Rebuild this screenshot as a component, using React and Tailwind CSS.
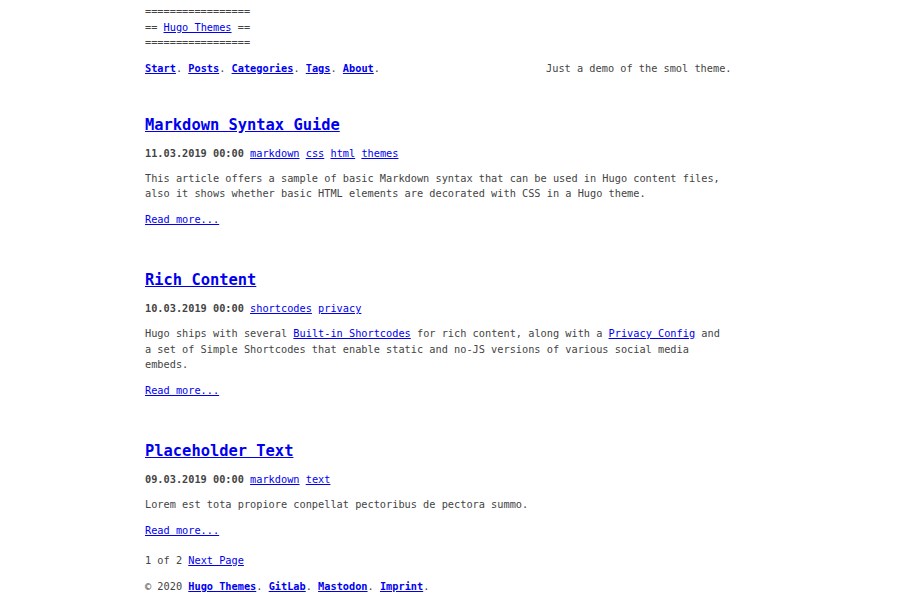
export default function App() {
  const link = "text-[#0000ee] underline";
  const posts = [
    {
      title: "Markdown Syntax Guide",
      date: "11.03.2019 00:00",
      tags: ["markdown", "css", "html", "themes"],
      body: (
        <>
          This article offers a sample of basic Markdown syntax that can be used in Hugo content files,
          also it shows whether basic HTML elements are decorated with CSS in a Hugo theme.
        </>
      ),
    },
    {
      title: "Rich Content",
      date: "10.03.2019 00:00",
      tags: ["shortcodes", "privacy"],
      body: (
        <>
          Hugo ships with several <a className={link}>Built-in Shortcodes</a> for rich content, along with a{" "}
          <a className={link}>Privacy Config</a> and a set of Simple Shortcodes that enable static and no-JS versions of various social media embeds.
        </>
      ),
    },
    {
      title: "Placeholder Text",
      date: "09.03.2019 00:00",
      tags: ["markdown", "text"],
      body: <>Lorem est tota propiore conpellat pectoribus de pectora summo.</>,
    },
  ];
  return (
    <div
      className="min-h-[600px] bg-white text-[#444] text-[10.28px] leading-[15.5px]"
      style={{ fontFamily: '"DejaVu Sans Mono", monospace' }}
    >
      <div className="ml-[145px] w-[586.5px] pt-[4px]">
        <header>
          <div>=================</div>
          <div>
            == <a className={link}>Hugo Themes</a> ==
          </div>
          <div>=================</div>
          <nav className="mt-[10px] flex justify-between">
            <div>
              <a className={`${link} font-bold`}>Start</a>. <a className={`${link} font-bold`}>Posts</a>.{" "}
              <a className={`${link} font-bold`}>Categories</a>. <a className={`${link} font-bold`}>Tags</a>.{" "}
              <a className={`${link} font-bold`}>About</a>.
            </div>
            <div>Just a demo of the smol theme.</div>
          </nav>
        </header>
        <main className="mt-[36.5px]">
          {posts.map((p, i) => (
            <article key={i} className={i > 0 ? "mt-[41px]" : ""}>
              <h2 className="pt-[1px] text-[15.42px] leading-[23px] font-bold">
                <a className={link}>{p.title}</a>
              </h2>
              <div className="mt-[9px]">
                <span className="font-bold">{p.date}</span>
                {p.tags.map((t) => (
                  <span key={t}>
                    {" "}
                    <a className={link}>{t}</a>
                  </span>
                ))}
              </div>
              <p className="mt-[9.5px]">{p.body}</p>
              <div className="mt-[10px]">
                <a className={link}>Read more...</a>
              </div>
            </article>
          ))}
          <div className="mt-[14.5px]">
            1 of 2 <a className={link}>Next Page</a>
          </div>
        </main>
        <footer className="mt-[10.5px]">
          © 2020 <a className={`${link} font-bold`}>Hugo Themes</a>. <a className={`${link} font-bold`}>GitLab</a>.{" "}
          <a className={`${link} font-bold`}>Mastodon</a>. <a className={`${link} font-bold`}>Imprint</a>.
        </footer>
      </div>
    </div>
  );
}
